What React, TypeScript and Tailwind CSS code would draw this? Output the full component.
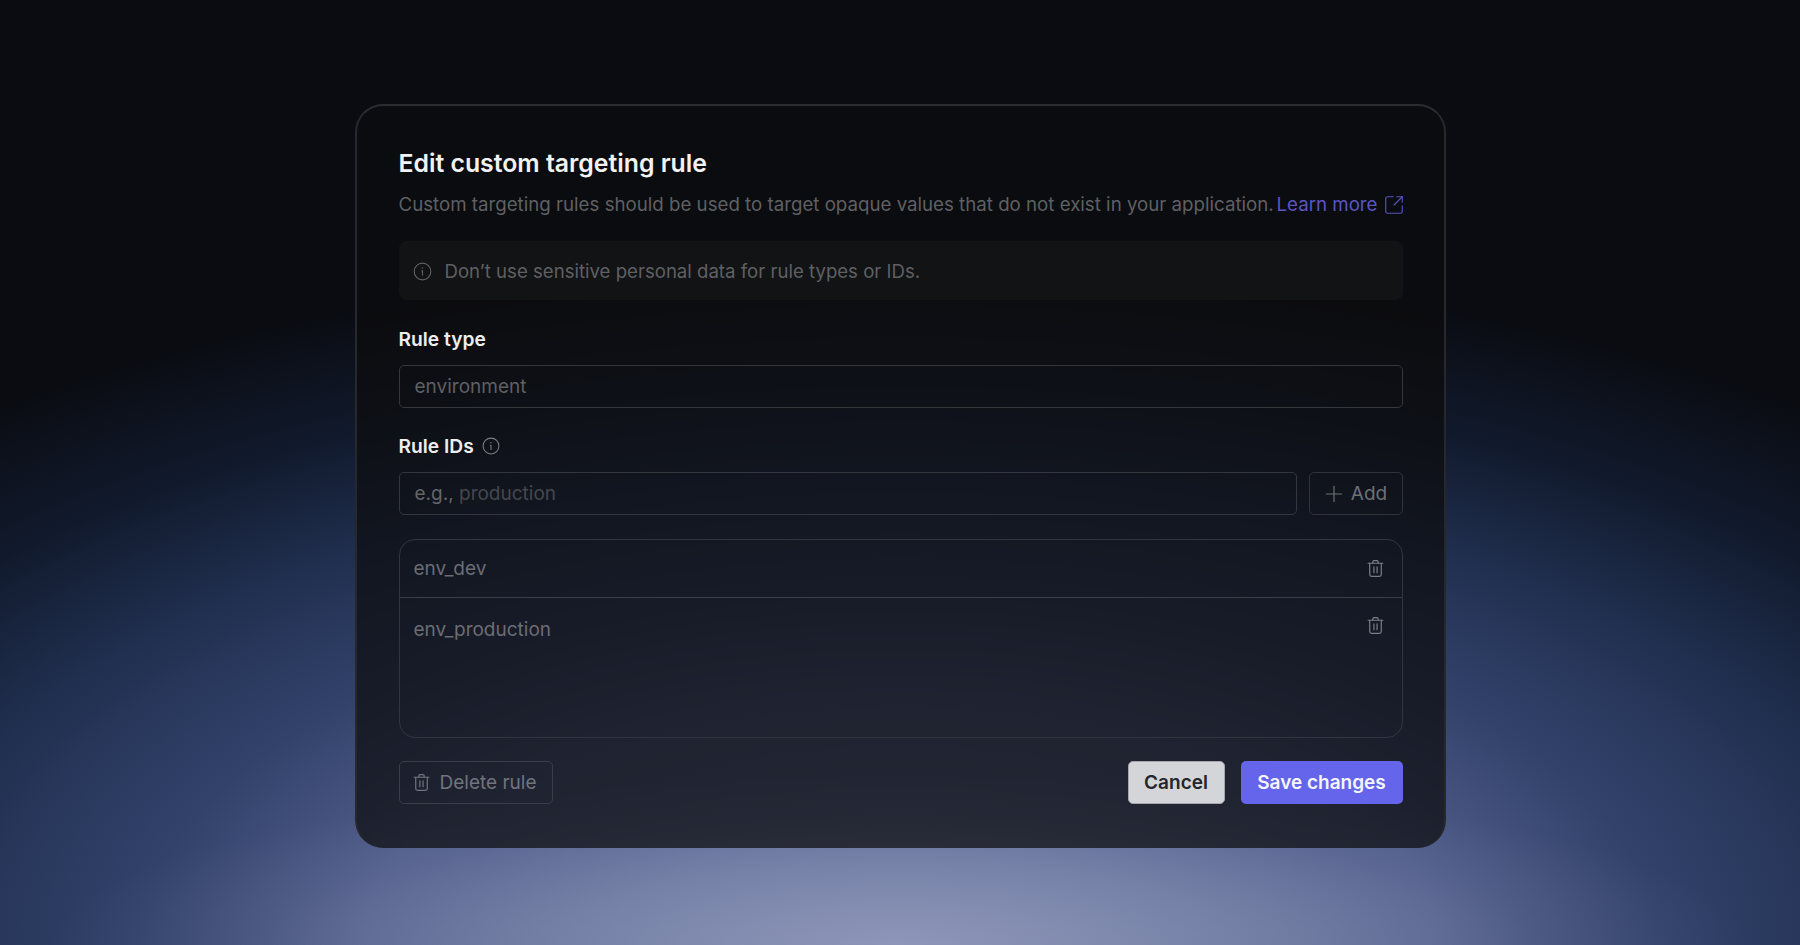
import { Plus, SquareArrowOutUpRight } from "lucide-react";

const Trash = ({ className }: { className: string }) => (
  <svg
    viewBox="0 0 20 20"
    fill="none"
    stroke="currentColor"
    strokeWidth="1.15"
    strokeLinecap="round"
    strokeLinejoin="round"
    className={className}
  >
    <path d="M3 5h14" />
    <path d="M7.5 5V3.4c0-.5.4-.9.9-.9h3.2c.5 0 .9.4.9.9V5" />
    <path d="M4.5 5v10.7c0 1 .8 1.8 1.8 1.8h7.4c1 0 1.8-.8 1.8-1.8V5" />
    <path d="M8.5 8.5v5.5" />
    <path d="M11.5 8.5v5.5" />
  </svg>
);

const InfoIcon = ({ className }: { className: string }) => (
  <svg viewBox="0 0 18 18" fill="none" stroke="currentColor" strokeWidth="1.05" strokeLinecap="round" className={className}>
    <circle cx="9" cy="9" r="7.9" />
    <path d="M8.3 8.4H9v4" />
    <path d="M8.9 5.6v.2" strokeWidth="1.4" />
  </svg>
);

export default function App() {
  return (
    <div className="h-[945px] w-full overflow-hidden bg-[#08090b] bg-[radial-gradient(ellipse_850px_170px_at_50%_100%,rgba(165,172,200,0.6)_0%,rgba(165,172,200,0.34)_45%,rgba(165,172,200,0.1)_75%,rgba(165,172,200,0)_100%),radial-gradient(ellipse_1220px_570px_at_50%_100%,#6a76a0_0%,#606d99_17%,#505d8a_44%,#33426b_62%,#202f4f_82%,#111a2d_100%,#0a0c12_120%)] flex items-start justify-center pt-[104px] font-['Inter',sans-serif]">
      <div className="w-[1091px] h-[744px] rounded-[28px] border-[2.5px] border-b-0 border-x-[#26282d] border-t-[#2c2d31] bg-[#0c0d0e]/[0.72] pl-[42px] pr-[41px] pt-[41px]">
        <h1 className="text-[24.8px] leading-[32px] font-semibold text-[#f2f2f2]">Edit custom targeting rule</h1>
        <div className="mt-[12px] flex items-center justify-between whitespace-nowrap text-[18.7px] leading-[28px] text-[#5f6063]">
          <span>Custom targeting rules should be used to target opaque values that do not exist in your application.</span>
          <a className="flex items-center gap-[5px] text-[#5a54c4]">
            Learn more
            <SquareArrowOutUpRight className="-mr-[2px] size-[22px]" strokeWidth={1.2} />
          </a>
        </div>
        <div className="mt-[22px] flex h-[59px] items-center gap-[13px] rounded-lg bg-[#141517]/80 pl-[14px] pt-[2px] text-[18.6px] text-[#5f6063]">
          <InfoIcon className="size-[19px]" />
          <span>Don’t use sensitive personal data for rule types or IDs.</span>
        </div>
        <div className="mt-[27px] text-[19.2px] leading-[24px] font-semibold text-[#ededed]">Rule type</div>
        <div className="mt-[14px] flex h-[43px] items-center rounded-[5px] border border-[#35373b] px-[15px] pt-[2px] text-[19px] text-[#5f6063]">environment</div>
        <div className="mt-[26px] flex items-center gap-[8px] text-[19.2px] leading-[24px] font-semibold text-[#ededed]">
          Rule IDs
          <InfoIcon className="size-[18px] text-[#7a7c80]" />
        </div>
        <div className="mt-[14px] flex gap-[12px]">
          <div className="flex h-[43px] flex-1 items-center rounded-[5px] border border-[#33363c] px-[15px] pt-[2px] text-[19px] text-[#63656a]">
            e.g.,&nbsp;<span className="text-[#45474d]">production</span>
          </div>
          <div className="flex h-[43px] w-[94px] items-center justify-center gap-[4px] rounded-[5px] border border-[#2f3239] pr-[3px] text-[19px] text-[#6d7076]">
            <Plus className="size-[26px]" strokeWidth={1.1} />
            <span className="pt-[2px]">Add</span>
          </div>
        </div>
        <div className="mt-[24px] h-[199px] rounded-[16px] border border-[#31353f] text-[19px] text-[#6a6d75]">
          <div className="flex h-[58px] items-center justify-between border-b border-[#3a3e49] pl-[14px] pr-[16px]">
            <span className="pt-[2px]">env_dev</span>
            <Trash className="size-[21px] text-[#7a7d85]" />
          </div>
          <div className="flex items-start justify-between pl-[14px] pr-[16px] pt-[18px]">
            env_production
            <Trash className="-mt-[1px] size-[21px] text-[#7a7d85]" />
          </div>
        </div>
        <div className="mt-[23px] flex items-center justify-between">
          <div className="flex h-[43px] w-[154px] items-center gap-[8px] rounded-[5px] border border-[#3a3e4a] pl-[11px] text-[19px] text-[#71747e]">
            <Trash className="size-[21px] text-[#71747e]" />
            <span className="pt-[2px]">Delete rule</span>
          </div>
          <div className="flex gap-[16px]">
            <div className="flex h-[43px] w-[97px] items-center justify-center rounded-[5px] border border-[#a5a7ab] bg-[#d3d5d8] pt-[2px] text-[19px] font-semibold text-[#24262b]">Cancel</div>
            <div className="flex h-[43px] w-[162px] items-center justify-center rounded-[5px] bg-[#6465ea] pt-[2px] text-[19px] font-semibold text-[#f5f5fa]">Save changes</div>
          </div>
        </div>
      </div>
    </div>
  );
}
